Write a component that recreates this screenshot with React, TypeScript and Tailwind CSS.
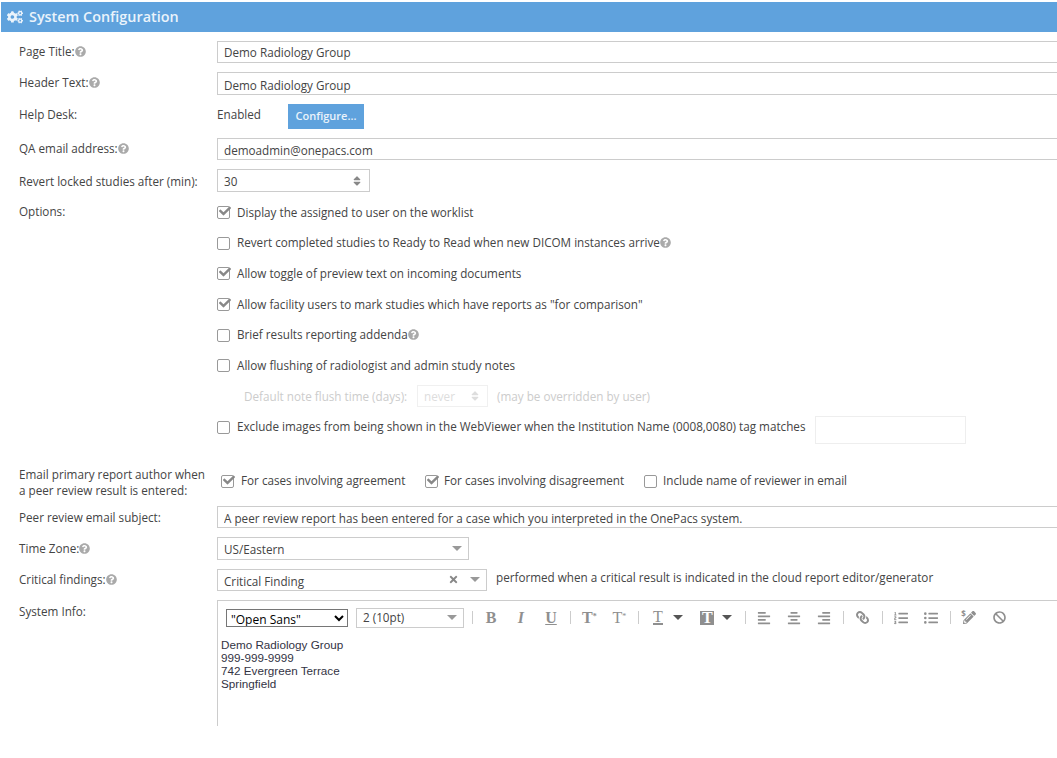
import type { ReactNode } from "react";
import {
  FaAlignCenter,
  FaAlignLeft,
  FaAlignRight,
  FaBan,
  FaCheck,
  FaCogs,
  FaLink,
  FaListOl,
  FaListUl,
  FaPencilAlt,
  FaQuestionCircle,
  FaSort,
  FaTimes,
} from "react-icons/fa";

const OPTIONS_TOP = [
  { label: "Display the assigned to user on the worklist", checked: true },
  { label: "Revert completed studies to Ready to Read when new DICOM instances arrive", checked: false, help: true },
  { label: "Allow toggle of preview text on incoming documents", checked: true },
  { label: 'Allow facility users to mark studies which have reports as "for comparison"', checked: true },
  { label: "Brief results reporting addenda", checked: false, help: true },
  { label: "Allow flushing of radiologist and admin study notes", checked: false },
];

function Help() {
  return <FaQuestionCircle className="inline-block shrink-0 align-[-1px] text-[#aaaaaa]" size={11} />;
}

function Checkbox({ checked }: { checked: boolean }) {
  return (
    <span className="relative flex h-[13px] w-[13px] shrink-0 items-center justify-center rounded-[2px] border border-[#999999] bg-white">
      {checked && <FaCheck className="absolute left-px top-[-2px] text-[#888888]" size={12} />}
    </span>
  );
}

function Caret({ className = "border-t-[#999999]" }: { className?: string }) {
  return <span className={`h-0 w-0 border-x-[5px] border-t-[5px] border-x-transparent ${className}`} />;
}

function Row({
  label,
  help,
  height,
  labelPad = "pt-0",
  children,
}: {
  label: ReactNode;
  help?: boolean;
  height: string;
  labelPad?: string;
  children: ReactNode;
}) {
  return (
    <div className={`flex items-start ${height}`}>
      <div className={`w-[216px] shrink-0 pl-[18px] leading-[20px] ${labelPad}`}>
        {label}
        {help && <Help />}
      </div>
      {children}
    </div>
  );
}

function TextInput({ value, className = "h-[22px]" }: { value: string; className?: string }) {
  return (
    <input
      readOnly
      defaultValue={value}
      className={`${className} w-[860px] shrink-0 border border-[#cccccc] px-1.5 text-[#444444] outline-none`}
    />
  );
}

function Sep() {
  return <span className="ml-1 mr-[3.4px] h-[13px] w-px shrink-0 bg-[#cccccc]" />;
}

function Tool({ children, wide }: { children: ReactNode; wide?: boolean }) {
  return (
    <span className={`flex shrink-0 items-center justify-center text-[#8f8f8f] ${wide ? "w-[49px] gap-2" : "w-[30px]"}`}>
      {children}
    </span>
  );
}

function SerifGlyph({ children, className = "" }: { children: ReactNode; className?: string }) {
  return <span className={`font-['Liberation_Serif',serif] text-[16px] font-bold leading-4 ${className}`}>{children}</span>;
}

export default function App() {
  return (
    <div className="h-[758px] w-full overflow-hidden bg-white pl-px pt-0.5 font-['Open_Sans',sans-serif] text-[11.7px] text-[#444444]">
      {/* Title bar */}
      <div className="flex h-[30px] items-center gap-[6px] bg-[#5fa2dd] pb-px pl-[6px] text-[14.4px] font-semibold text-[#eaf3fb]">
        <FaCogs size={16} />
        <span>System Configuration</span>
      </div>

      <div className="pt-[9px]">
        <Row label="Page Title:" help height="h-[31px]">
          <TextInput value="Demo Radiology Group" />
        </Row>
        <Row label="Header Text:" help height="h-[32px]">
          <TextInput value="Demo Radiology Group" className="h-[23px] pt-[2px]" />
        </Row>
        <Row label="Help Desk:" height="h-[34px]">
          <span className="w-[71px] leading-[20px]">Enabled</span>
          <button className="h-[25px] w-[76px] bg-[#5fa2dd] text-[11px] font-semibold text-[#eaf3fb]">Configure...</button>
        </Row>
        <Row label="QA email address:" help height="h-[31px]">
          <TextInput value="demoadmin@onepacs.com" className="h-[22px] pt-px" />
        </Row>
        <Row label="Revert locked studies after (min):" labelPad="pt-[2px]" height="h-[28px]">
          <div className="flex h-[23px] w-[153px] items-center justify-between border border-[#cccccc] pl-1.5 pr-[6px]">
            <span className="pt-[2px]">30</span>
            <FaSort className="text-[#888888]" size={12} />
          </div>
        </Row>

        <div className="flex">
          <div className="w-[216px] shrink-0 pl-[18px] pt-[4px] leading-[20px]">Options:</div>
          <div className="flex flex-col">
            {OPTIONS_TOP.map((opt) => (
              <div key={opt.label} className="flex h-[30.7px] items-center gap-[7px]">
                <Checkbox checked={opt.checked} />
                <span>
                  {opt.label}
                  {opt.help && <Help />}
                </span>
              </div>
            ))}
            <div className="flex h-[30.7px] items-center pl-[27px] text-[#cccccc]">
              <span className="w-[173px]">Default note flush time (days):</span>
              <div className="flex h-[22px] w-[71px] items-center justify-between border border-[#f0f0f0] pl-1.5 pr-[6px] text-[#dddddd]">
                <span>never</span>
                <FaSort className="text-[#dddddd]" size={12} />
              </div>
              <span className="ml-[9px]">(may be overridden by user)</span>
            </div>
            <div className="flex h-[30.7px] items-center gap-[7px]">
              <Checkbox checked={false} />
              <span className="w-[571px] shrink-0">
                Exclude images from being shown in the WebViewer when the Institution Name (0008,0080) tag matches
              </span>
              <div className="mt-[6px] h-[28px] w-[151px] shrink-0 border border-[#eeeeee]" />
            </div>
          </div>
        </div>

        <div className="mt-[23px] flex h-10 items-start">
          <div className="w-[216px] shrink-0 pl-[18px] leading-[16px]">
            Email primary report author when
            <br />a peer review result is entered:
          </div>
          <div className="flex h-[30px] items-center pl-1 pt-[1px]">
            <Checkbox checked />
            <span className="ml-[7px] w-[184px]">For cases involving agreement</span>
            <Checkbox checked />
            <span className="ml-[6px] w-[200px]">For cases involving disagreement</span>
            <Checkbox checked={false} />
            <span className="ml-[6px]">Include name of reviewer in email</span>
          </div>
        </div>

        <Row label="Peer review email subject:" labelPad="pt-px" height="h-[31px]">
          <TextInput value="A peer review report has been entered for a case which you interpreted in the OnePacs system." className="h-[22px] pt-[2px]" />
        </Row>
        <Row label="Time Zone:" help labelPad="pt-px" height="h-[32px]">
          <div className="flex h-[23px] w-[252px] items-center justify-between border border-[#cccccc] pl-1.5 pr-[6px]">
            <span className="pt-[3px]">US/Eastern</span>
            <Caret />
          </div>
        </Row>
        <Row label="Critical findings:" help height="h-[31px]">
          <div className="flex h-[22px] w-[270px] items-center border border-[#cccccc] pl-1.5 pr-[6px]">
            <span className="flex-1 pt-[4px]">Critical Finding</span>
            <FaTimes className="mr-[11px] text-[#888888]" size={11} />
            <Caret />
          </div>
          <span className="ml-[9px] leading-[16px]">performed when a critical result is indicated in the cloud report editor/generator</span>
        </Row>

        <Row label="System Info:" labelPad="pt-px" height="h-[126px]">
          <div className="h-[126px] w-[860px] shrink-0 border-l border-t border-[#cccccc]">
            {/* Editor toolbar */}
            <div className="flex h-[34px] items-center pl-2">
              <select className="h-[18px] w-[122px] border border-[#767676] pl-0 text-[12px] text-black" defaultValue="Open Sans">
                <option value="Open Sans">"Open Sans"</option>
              </select>
              <div className="ml-2 mr-[3.6px] flex h-[20px] w-[108px] items-center justify-between border border-[#cccccc] pl-1.5 pr-[6px]">
                <span>2 (10pt)</span>
                <Caret />
              </div>
              <Sep />
              <Tool><SerifGlyph>B</SerifGlyph></Tool>
              <Tool><SerifGlyph className="italic">I</SerifGlyph></Tool>
              <Tool><SerifGlyph className="underline">U</SerifGlyph></Tool>
              <Sep />
              <Tool><SerifGlyph>T<sup className="text-[8px]">*</sup></SerifGlyph></Tool>
              <Tool><SerifGlyph className="font-normal">T<sup className="text-[8px]">*</sup></SerifGlyph></Tool>
              <Sep />
              <Tool wide>
                <SerifGlyph className="ml-px mr-[2px] border-b-2 border-[#8f8f8f] font-normal leading-[13px]">T</SerifGlyph>
                <Caret className="border-t-[#555555]" />
              </Tool>
              <Tool wide>
                <span className="flex h-[14px] w-[14px] items-center justify-center bg-[#8f8f8f]">
                  <SerifGlyph className="text-white">T</SerifGlyph>
                </span>
                <Caret className="border-t-[#555555]" />
              </Tool>
              <Sep />
              <Tool><FaAlignLeft size={14} /></Tool>
              <Tool><FaAlignCenter size={14} /></Tool>
              <Tool><FaAlignRight size={14} /></Tool>
              <Sep />
              <Tool><FaLink size={13} className="-scale-x-100" /></Tool>
              <Sep />
              <Tool><FaListOl size={14} /></Tool>
              <Tool><FaListUl size={14} /></Tool>
              <Sep />
              <Tool>
                <span className="relative block h-[14px] w-[14px]">
                  <FaPencilAlt size={13} className="absolute right-0 top-0" />
                  <span className="absolute left-[-1px] top-[-3px] text-[8px] font-bold">$</span>
                </span>
              </Tool>
              <Tool><FaBan size={13} /></Tool>
            </div>
            <div className="pl-[3px] pt-[3px] font-['Liberation_Sans',sans-serif] leading-[13px] text-[#333344]">
              <div>Demo Radiology Group</div>
              <div>999-999-9999</div>
              <div>742 Evergreen Terrace</div>
              <div>Springfield</div>
            </div>
          </div>
        </Row>
      </div>
    </div>
  );
}
